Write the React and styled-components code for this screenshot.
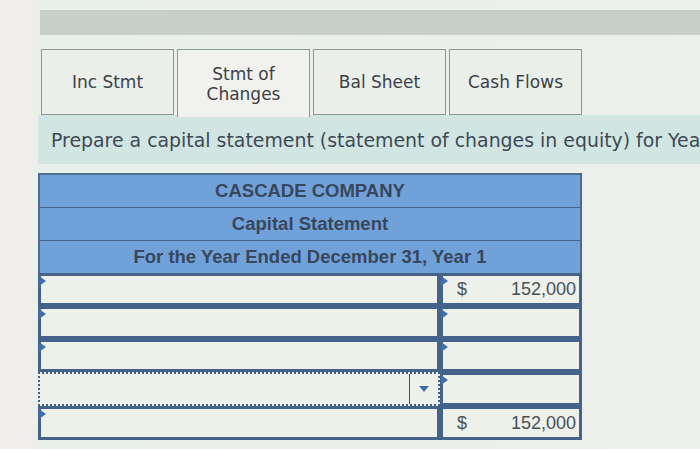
import React from "react";
import styled, { createGlobalStyle } from "styled-components";

const Global = createGlobalStyle`
  html, body { margin: 0; padding: 0; }
  body {
    width: 700px; height: 449px; overflow: hidden;
    background: linear-gradient(90deg, #f1efec 0px, #f0eeeb 30px, #e9efe9 40px, #ecf0ea 100%);
    font-family: "DejaVu Sans", Verdana, sans-serif;
  }
`;

const Page = styled.div`
  padding: 10px 0 0 39px;
  display: flex;
  flex-direction: column;
`;

const TopBar = styled.div`
  height: 25px;
  background: #c8cfc8;
  margin-left: 1px;
`;

const Tabs = styled.div`
  display: flex;
  gap: 3px;
  margin-top: 11px;
  margin-left: 2px;
  align-items: flex-end;
  height: 69px;
`;

const Tab = styled.div`
  width: 133px;
  height: ${(p) => (p.$active ? 68 : 66)}px;
  box-sizing: border-box;
  border: 1px solid #8e9893;
  border-bottom: ${(p) => (p.$active ? "none" : "1px solid #8e9893")};
  background: ${(p) => (p.$active ? "#f1f2ee" : "#eaefe9")};
  display: flex;
  align-items: center;
  justify-content: center;
  text-align: center;
  font-family: "DejaVu Sans", Verdana, sans-serif;
  font-size: 17px;
  line-height: 20px;
  color: #3c4147;
  margin-bottom: ${(p) => (p.$active ? -2 : 0)}px;
  position: relative;
  z-index: 1;
`;

const Band = styled.div`
  height: 49px;
  background: #d1e5e2;
  display: flex;
  align-items: center;
  padding-left: 13px;
  margin-left: -1px;
  white-space: nowrap;
  overflow: hidden;
  font-size: 18.9px;
  color: #3d4a55;
`;

const Table = styled.div`
  margin-top: 9px;
  margin-left: -1px;
  width: 544px;
  display: flex;
  flex-direction: column;
`;

const Header = styled.div`
  background: #70a1d9;
  border: 2px solid #4d6b8c;
  border-bottom: none;
  display: flex;
  flex-direction: column;
`;

const HeadRow = styled.div`
  height: 32px;
  display: flex;
  align-items: center;
  justify-content: center;
  font-family: "Liberation Sans", Arial, sans-serif;
  font-weight: bold;
  font-size: 18.5px;
  color: #38475b;
  border-top: ${(p) => (p.$first ? "none" : "1px solid #4a6588")};
`;

const Row = styled.div`
  display: flex;
  height: ${(p) => p.$h || 33}px;
`;

const Cell = styled.div`
  position: relative;
  box-sizing: border-box;
  width: ${(p) => p.$w}px;
  height: 100%;
  border: 3px solid #44638a;
  background: #edf1ea;
  display: flex;
  align-items: center;
  font-family: "Liberation Sans", Arial, sans-serif;
  font-size: 18px;
  color: #4a5058;
`;

const DropCell = styled(Cell)`
  border: 2px dotted #3d5f8e;
  justify-content: flex-end;
`;

const Marker = styled.span`
  position: absolute;
  left: -2px;
  top: 0px;
  width: 0;
  height: 0;
  border-top: 5px solid transparent;
  border-bottom: 5px solid transparent;
  border-left: 7px solid #3e6fb1;
`;

const Dollar = styled.span`
  margin-left: 14px;
`;

const Amount = styled.span`
  margin-left: auto;
  margin-right: 3px;
`;

const DropButton = styled.div`
  width: 28px;
  height: 100%;
  border-left: 1px solid #444c55;
  display: flex;
  align-items: center;
  justify-content: center;
`;

const Arrow = styled.span`
  width: 0;
  height: 0;
  border-left: 5px solid transparent;
  border-right: 5px solid transparent;
  border-top: 6px solid #3e6fb1;
`;

export default function App() {
  return (
    <>
      <Global />
      <Page>
        <TopBar />
        <Tabs>
          <Tab>Inc Stmt</Tab>
          <Tab $active>
            Stmt of
            <br />
            Changes
          </Tab>
          <Tab>Bal Sheet</Tab>
          <Tab>Cash Flows</Tab>
        </Tabs>
        <Band>
          Prepare a capital statement (statement of changes in equity) for Year 1.
        </Band>
        <Table>
          <Header>
            <HeadRow $first>CASCADE COMPANY</HeadRow>
            <HeadRow>Capital Statement</HeadRow>
            <HeadRow>For the Year Ended December 31, Year 1</HeadRow>
          </Header>
          <Row>
            <Cell $w={402}>
              <Marker />
            </Cell>
            <Cell $w={142}>
              <Marker />
              <Dollar>$</Dollar>
              <Amount>152,000</Amount>
            </Cell>
          </Row>
          <Row>
            <Cell $w={402}>
              <Marker />
            </Cell>
            <Cell $w={142}>
              <Marker />
            </Cell>
          </Row>
          <Row>
            <Cell $w={402}>
              <Marker />
            </Cell>
            <Cell $w={142}>
              <Marker />
            </Cell>
          </Row>
          <Row $h={34}>
            <DropCell $w={402}>
              <DropButton>
                <Arrow />
              </DropButton>
            </DropCell>
            <Cell $w={142}>
              <Marker />
            </Cell>
          </Row>
          <Row $h={34}>
            <Cell $w={402}>
              <Marker />
            </Cell>
            <Cell $w={142}>
              <Dollar>$</Dollar>
              <Amount>152,000</Amount>
            </Cell>
          </Row>
        </Table>
      </Page>
    </>
  );
}
